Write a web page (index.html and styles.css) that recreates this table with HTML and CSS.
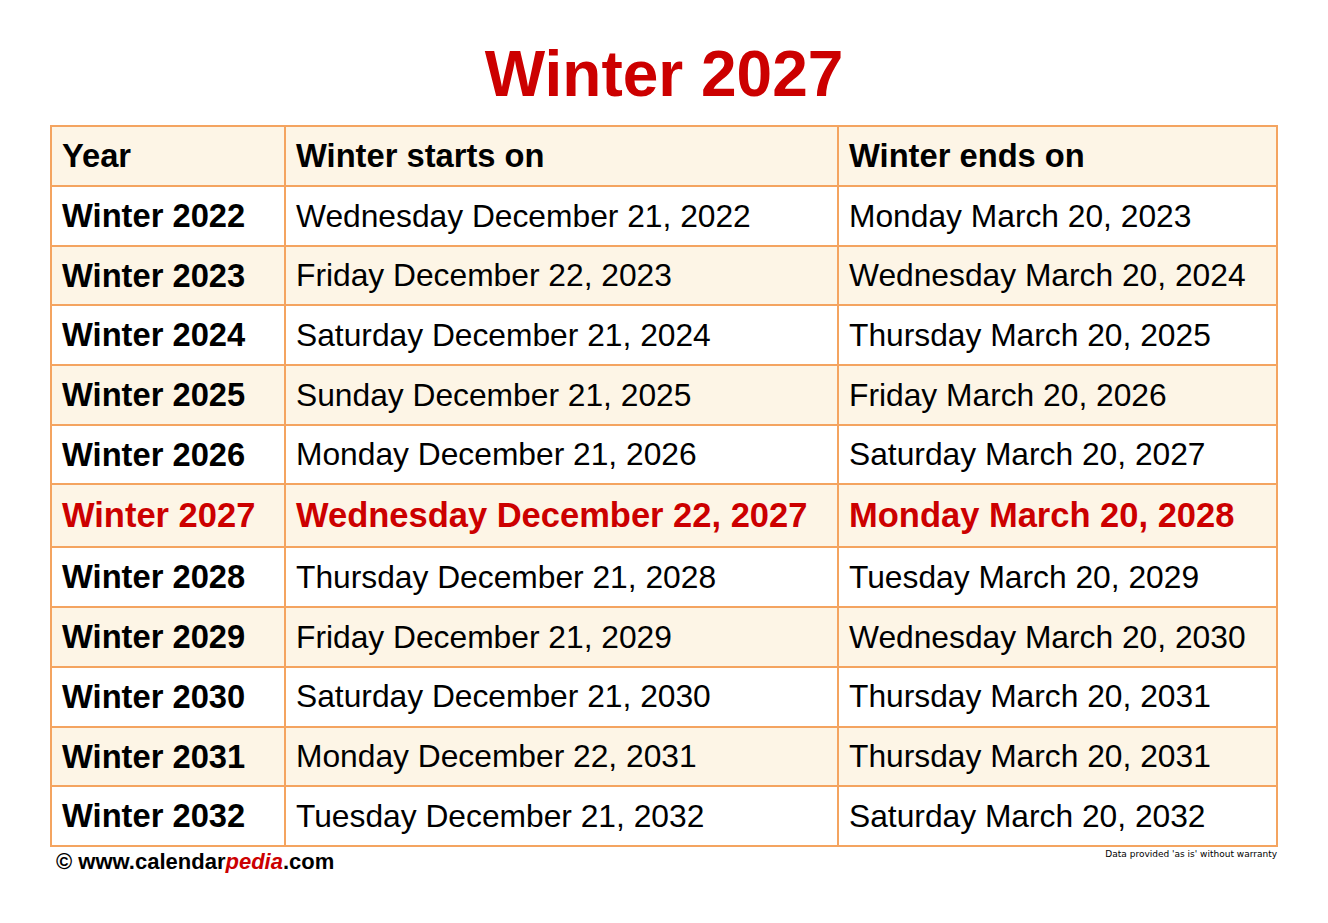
FILE: index.html
```html
<!DOCTYPE html>
<html lang="en">
<head>
<meta charset="utf-8">
<title>Winter 2027</title>
<link rel="stylesheet" href="styles.css">
</head>
<body>
<h1 class="title">Winter 2027</h1>
<table class="seasons">
  <colgroup>
    <col class="c-year">
    <col class="c-start">
    <col class="c-end">
  </colgroup>
  <thead>
    <tr class="head"><th>Year</th><th>Winter starts on</th><th>Winter ends on</th></tr>
  </thead>
  <tbody>
    <tr><td class="yr">Winter 2022</td><td>Wednesday December 21, 2022</td><td>Monday March 20, 2023</td></tr>
    <tr class="alt"><td class="yr">Winter 2023</td><td>Friday December 22, 2023</td><td>Wednesday March 20, 2024</td></tr>
    <tr><td class="yr">Winter 2024</td><td>Saturday December 21, 2024</td><td>Thursday March 20, 2025</td></tr>
    <tr class="alt"><td class="yr">Winter 2025</td><td>Sunday December 21, 2025</td><td>Friday March 20, 2026</td></tr>
    <tr><td class="yr">Winter 2026</td><td>Monday December 21, 2026</td><td>Saturday March 20, 2027</td></tr>
    <tr class="alt current"><td class="yr">Winter 2027</td><td>Wednesday December 22, 2027</td><td>Monday March 20, 2028</td></tr>
    <tr><td class="yr">Winter 2028</td><td>Thursday December 21, 2028</td><td>Tuesday March 20, 2029</td></tr>
    <tr class="alt"><td class="yr">Winter 2029</td><td>Friday December 21, 2029</td><td>Wednesday March 20, 2030</td></tr>
    <tr><td class="yr">Winter 2030</td><td>Saturday December 21, 2030</td><td>Thursday March 20, 2031</td></tr>
    <tr class="alt"><td class="yr">Winter 2031</td><td>Monday December 22, 2031</td><td>Thursday March 20, 2031</td></tr>
    <tr><td class="yr">Winter 2032</td><td>Tuesday December 21, 2032</td><td>Saturday March 20, 2032</td></tr>
  </tbody>
</table>
<div class="footer">
  <span class="site">&copy; www.calendar<em class="pedia">pedia</em>.com</span>
  <span class="note">Data provided 'as is' without warranty</span>
</div>
</body>
</html>
```
FILE: styles.css
```css
html, body {
  margin: 0;
  padding: 0;
  background: #ffffff;
}

body {
  font-family: "Liberation Sans", Arial, sans-serif;
  color: #000000;
}

.title {
  margin: 42px 0 19px;
  font-size: 64px;
  line-height: 1;
  font-weight: bold;
  text-align: center;
  color: #cc0000;
}

.seasons {
  width: 1226px;
  margin: 0 auto;
  border-collapse: collapse;
  table-layout: fixed;
}

.c-year { width: 234px; }
.c-start { width: 553px; }
.c-end { width: 439px; }

.seasons th,
.seasons td {
  border: 2px solid #f4a460;
  padding: 0 10px;
  text-align: left;
  vertical-align: middle;
  white-space: nowrap;
  line-height: 1.15;
}

.seasons th {
  font-size: 32.7px;
  font-weight: bold;
}

.seasons td {
  font-size: 31.75px;
  font-weight: normal;
}

.seasons td.yr {
  font-size: 32.7px;
  font-weight: bold;
}

.seasons tr { height: 59.7px; }
.seasons tr.head { height: 60px; background: #fdf5e6; }
.seasons tr.alt { background: #fdf5e6; }

.seasons tr.current { height: 63px; }
.seasons tr.current td,
.seasons tr.current td.yr {
  font-size: 34.5px;
  font-weight: bold;
  color: #cc0000;
}

.footer {
  width: 1228px;
  margin: 0 auto;
  padding-top: 2px;
  display: flex;
  justify-content: space-between;
  align-items: flex-start;
}

.site {
  padding-left: 6px;
  padding-top: 2px;
  font-size: 22px;
  line-height: 1;
  font-weight: bold;
}

.pedia {
  font-style: italic;
  color: #cc0000;
}

.note {
  font-family: "DejaVu Sans", Verdana, sans-serif;
  font-size: 9px;
  line-height: 1;
  padding-top: 1px;
  padding-right: 1px;
}
```
